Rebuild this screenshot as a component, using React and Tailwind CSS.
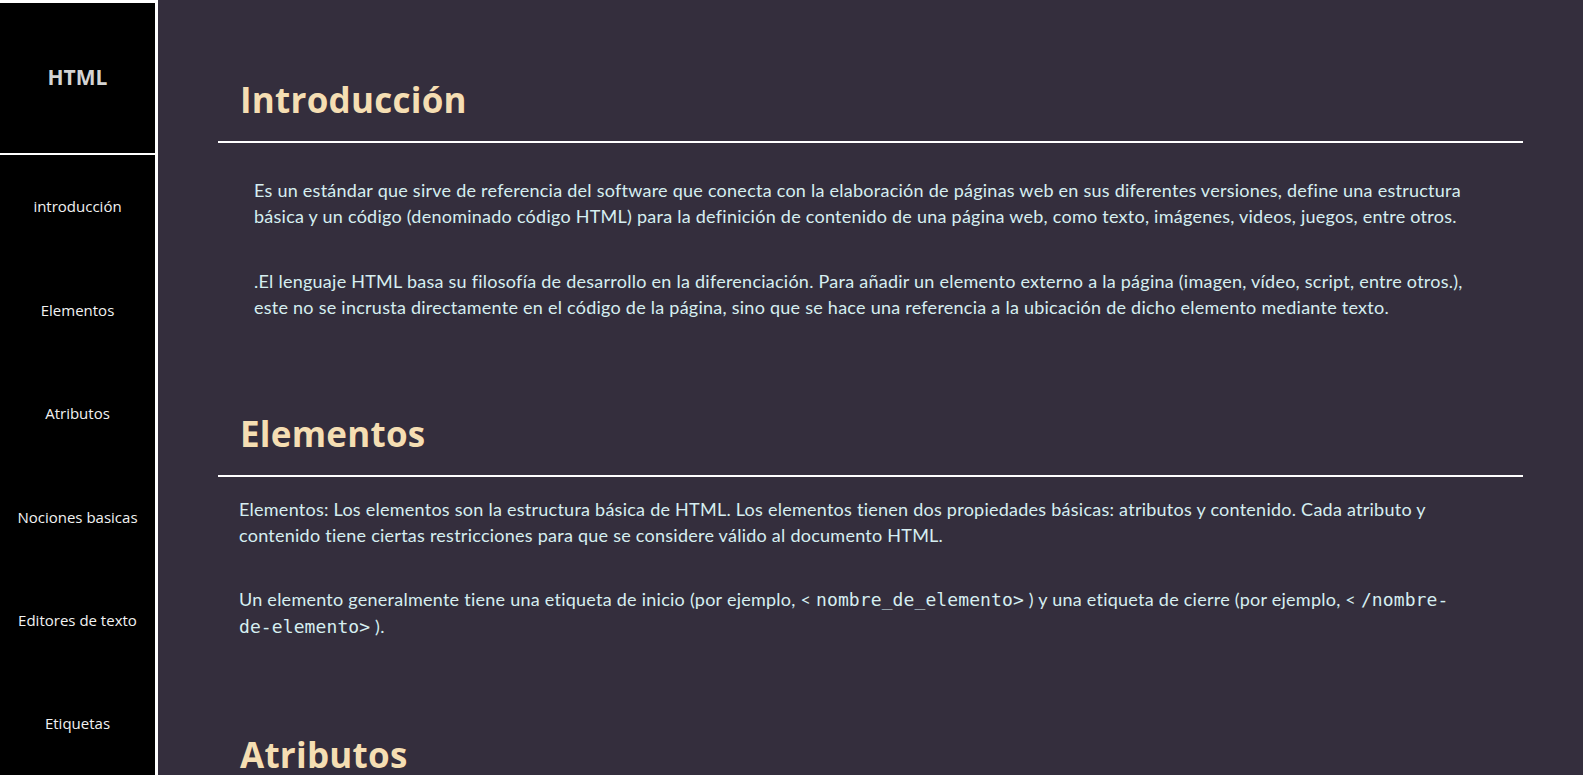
import React from 'react';

const NAV = ['introducción', 'Elementos', 'Atributos', 'Nociones basicas', 'Editores de texto', 'Etiquetas'];

const heading = "pl-[22px] text-[35px] leading-[49px] font-bold text-[#f5deb3] font-['Open_Sans',sans-serif]";
const code = "font-['DejaVu_Sans_Mono',monospace] tracking-[0.1px]";

const App = () => {
  return (
    <div className="flex h-screen overflow-hidden bg-[#342e3d]">

      {/* Sidebar */}
      <nav className="w-[158px] shrink-0 bg-black border-t-[3px] border-r-[3px] border-white font-['Open_Sans',sans-serif]">
        <header className="h-[152px] flex items-center justify-center border-b-2 border-white">
          <span className="text-[21px] font-bold text-[#d4d4d4]">HTML</span>
        </header>
        <ul>
          {NAV.map((item) => (
            <li key={item} className="h-[103.4px] flex items-center justify-center text-[15px] text-[#f2f2f2]">
              {item}
            </li>
          ))}
        </ul>
      </nav>

      {/* Content */}
      <main className="flex-1 overflow-hidden px-[60px] pt-[74.5px] font-['Lato',sans-serif] text-[18px] tracking-[0.25px] leading-[26px] text-[#d6eef1]">

        <section>
          <h2 className={heading}>Introducción</h2>
          <div className="mt-[17.5px] h-[2px] bg-white" />
          <div className="pt-[34px] pl-[36px] pr-[52px]">
            <p>
              Es un estándar que sirve de referencia del software que conecta con la elaboración de páginas web en sus diferentes versiones, define una estructura básica y un código (denominado código HTML) para la definición de contenido de una página web, como texto, imágenes, videos, juegos, entre otros.
            </p>
            <p className="mt-[39px]">
              .El lenguaje HTML basa su filosofía de desarrollo en la diferenciación. Para añadir un elemento externo a la página (imagen, vídeo, script, entre otros.), este no se incrusta directamente en el código de la página, sino que se hace una referencia a la ubicación de dicho elemento mediante texto.
            </p>
          </div>
        </section>

        <section className="mt-[88.5px]">
          <h2 className={heading}>Elementos</h2>
          <div className="mt-[17.5px] h-[2px] bg-white" />
          <div className="pt-[19px] pl-[21px] pr-[52px]">
            <p>
              Elementos: Los elementos son la estructura básica de HTML. Los elementos tienen dos propiedades básicas: atributos y contenido. Cada atributo y contenido tiene ciertas restricciones para que se considere válido al documento HTML.
            </p>
            <p className="mt-[38px]">
              Un elemento generalmente tiene una etiqueta de inicio (por ejemplo, &lt; <code className={code}>nombre_de_elemento&gt;</code> ) y una etiqueta de cierre (por ejemplo, &lt; <code className={code}>/nombre-de-elemento&gt;</code> ).
            </p>
          </div>
        </section>

        <section className="mt-[90px]">
          <h2 className={heading}>Atributos</h2>
          <div className="mt-[17.5px] h-[2px] bg-white" />
          <div className="pt-[19px] pl-[21px] pr-[52px]">
            <p>
              Los atributos de un elemento son pares nombre-valor, separados por "=", que se escriben en la etiqueta de inicio de un elemento, después del nombre del elemento.
            </p>
          </div>
        </section>

      </main>
    </div>
  );
};

export default App;
